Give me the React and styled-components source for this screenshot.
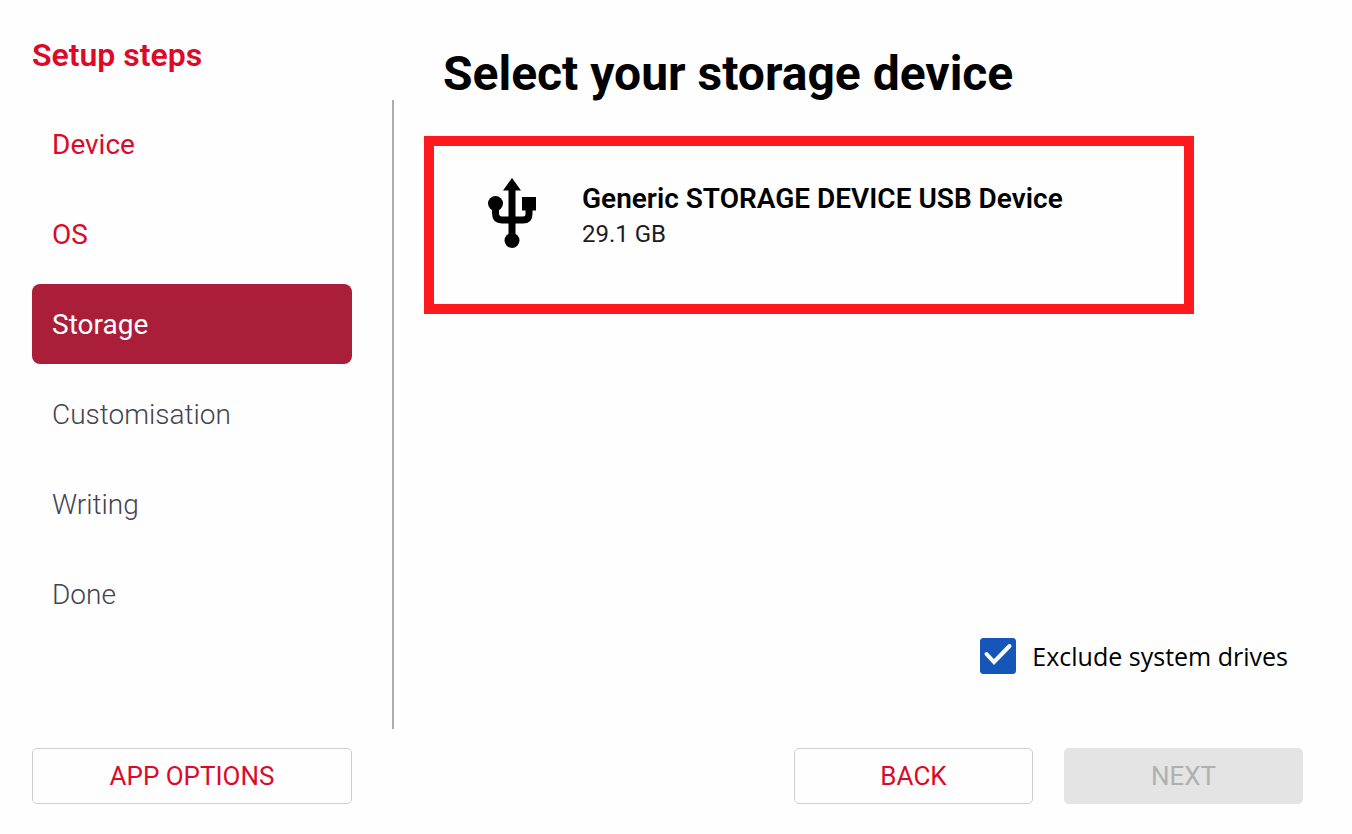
import React, { useState } from 'react'
import styled, { createGlobalStyle } from 'styled-components'

const GlobalStyle = createGlobalStyle`
    * {
        box-sizing: border-box;
    }
    body {
        margin: 0;
        background: #fefefe;
        color: #000;
        font-family: Roboto, "Liberation Sans", sans-serif;
    }
    h1, h2, p, ol {
        margin: 0;
        padding: 0;
    }
    button {
        font-family: inherit;
    }
`

const Page = styled.div`
    min-height: 100vh;
    display: flex;
    flex-direction: column;
    gap: 19px;
    padding-bottom: 30px;
`
const Body = styled.div`
    flex: 1;
    display: flex;
`
const Sidebar = styled.aside`
    width: 392px;
    flex-shrink: 0;
    padding: 35px 40px 0 32px;
`
const SidebarTitle = styled.h2`
    margin-bottom: 29px;
    font-size: 32px;
    line-height: 40px;
    font-weight: 600;
    color: #dc0a28;
`
const StepList = styled.ol`
    display: flex;
    flex-direction: column;
    gap: 10px;
    list-style: none;
`
const stepColors = {
    done: '#dc0a28',
    active: '#fff',
    pending: '#43434f',
}
const Step = styled.li`
    display: flex;
    align-items: center;
    height: 80px;
    padding: 0 20px;
    border-radius: 8px;
    font-size: 28px;
    font-weight: ${({ $state }) => ($state === 'pending' ? 300 : 400)};
    color: ${({ $state }) => stepColors[$state]};
    background: ${({ $state }) => ($state === 'active' ? '#ab1e3a' : 'transparent')};
`
const Divider = styled.div`
    width: 2px;
    margin-top: 100px;
    background: #aeacae;
`
const Main = styled.main`
    flex: 1;
    display: flex;
    flex-direction: column;
    padding: 44px 64px 55px 30px;
`
const Title = styled.h1`
    margin: 0 0 32px 19px;
    font-size: 48px;
    line-height: 60px;
    font-weight: 700;
`
const DeviceCard = styled.button`
    display: flex;
    align-items: flex-start;
    gap: 46px;
    height: 178px;
    margin-right: 94px;
    padding: 31px 54px;
    border: 10px solid #ff1a20;
    background: #fefefe;
    color: #000;
    text-align: left;
`
const DeviceText = styled.span`
    display: flex;
    flex-direction: column;
    padding-top: 4px;
`
const DeviceName = styled.span`
    font-size: 28px;
    line-height: 36px;
    font-weight: 600;
`
const DeviceSize = styled.span`
    font-size: 24px;
    line-height: 34px;
    font-weight: 400;
    color: #1c1c24;
`
const FilterLabel = styled.label`
    display: flex;
    align-items: center;
    align-self: flex-end;
    gap: 16px;
    margin-top: auto;
    font-family: "Open Sans", "Noto Sans", sans-serif;
    font-size: 25px;
    line-height: 36px;
`
const CheckWrap = styled.span`
    display: grid;
    width: 36px;
    height: 36px;

    > * {
        grid-area: 1 / 1;
    }
    svg {
        pointer-events: none;
    }
`
const Checkbox = styled.input`
    appearance: none;
    width: 36px;
    height: 36px;
    margin: 0;
    border: 1px solid #1656b8;
    border-radius: 3px;
    background: ${({ checked }) => (checked ? '#1656b8' : '#fff')};
`
const Footer = styled.footer`
    display: flex;
    justify-content: space-between;
    padding: 0 49px 0 32px;
`
const Actions = styled.div`
    display: flex;
    gap: 31px;
`
const Button = styled.button`
    width: ${({ $wide }) => ($wide ? 320 : 239)}px;
    height: 56px;
    border: 1px solid #cfcfd6;
    border-radius: 5px;
    background: #fefefe;
    font-size: 26px;
    color: #dc0a28;

    &:disabled {
        border-color: #e4e4e4;
        background: #e4e4e4;
        color: #b0b0b0;
    }
`

const UsbIcon = () => (
    <svg width="48" height="72" viewBox="0 0 48 72" aria-hidden="true">
        <path d="M24 1L33 13.500H15Z" />
        <circle cx="7.500" cy="26.500" r="7.500" />
        <rect x="34" y="20" width="14" height="13.500" />
        <circle cx="24" cy="63.500" r="7.500" />
        <path
            d="M24 12V62M7.500 27V36Q7.500 43 14 43H35Q41 43 41 37V30"
            fill="none"
            stroke="#000"
            strokeWidth="7"
        />
    </svg>
)

const steps = [
    { name: 'Device', state: 'done' },
    { name: 'OS', state: 'done' },
    { name: 'Storage', state: 'active' },
    { name: 'Customisation', state: 'pending' },
    { name: 'Writing', state: 'pending' },
    { name: 'Done', state: 'pending' },
]

const App = () => {
    const [excludeSystem, setExcludeSystem] = useState(true)

    return (
        <Page>
            <GlobalStyle />
            <Body>
                <Sidebar>
                    <SidebarTitle>Setup steps</SidebarTitle>
                    <StepList>
                        {steps.map(({ name, state }) => (
                            <Step
                                key={name}
                                $state={state}
                                aria-current={state === 'active' ? 'step' : undefined}
                            >
                                {name}
                            </Step>
                        ))}
                    </StepList>
                </Sidebar>
                <Divider />
                <Main>
                    <Title>Select your storage device</Title>
                    <DeviceCard type="button">
                        <UsbIcon />
                        <DeviceText>
                            <DeviceName>Generic STORAGE DEVICE USB Device</DeviceName>
                            <DeviceSize>29.1 GB</DeviceSize>
                        </DeviceText>
                    </DeviceCard>
                    <FilterLabel htmlFor="exclude-system">
                        <CheckWrap>
                            <Checkbox
                                id="exclude-system"
                                type="checkbox"
                                checked={excludeSystem}
                                onChange={(e) => setExcludeSystem(e.target.checked)}
                            />
                            {excludeSystem && (
                                <svg width="36" height="36" viewBox="0 0 36 36" aria-hidden="true">
                                    <path
                                        d="M6.500 16L14 24L29.500 8"
                                        fill="none"
                                        stroke="#fff"
                                        strokeWidth="4"
                                        strokeLinecap="round"
                                    />
                                </svg>
                            )}
                        </CheckWrap>
                        Exclude system drives
                    </FilterLabel>
                </Main>
            </Body>
            <Footer>
                <Button type="button" $wide>APP OPTIONS</Button>
                <Actions>
                    <Button type="button">BACK</Button>
                    <Button type="button" disabled>NEXT</Button>
                </Actions>
            </Footer>
        </Page>
    )
}

export default App
